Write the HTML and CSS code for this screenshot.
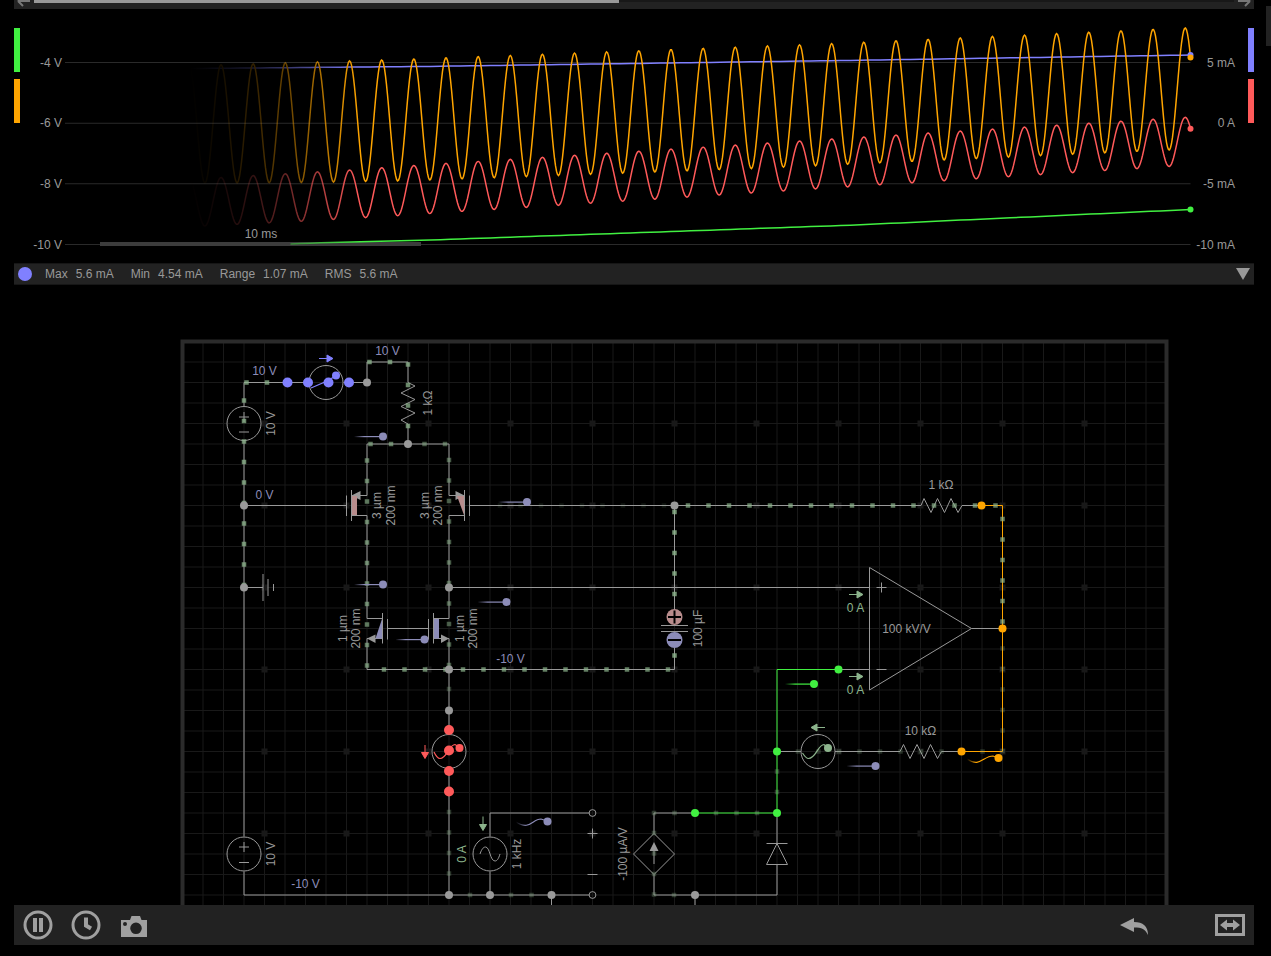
FILE: index.html
```html
<!DOCTYPE html>
<html lang="en">
<head>
<meta charset="utf-8">
<title>Circuit simulator</title>
<link rel="stylesheet" href="styles.css">
</head>
<body>
<main class="app">
  <div class="timeline">
    <button class="timeline-step" aria-label="Scroll back"><svg width="20" height="9"><path d="M4 1H16M4 1L9 6M4 1L9 -4"/></svg></button>
    <div class="timeline-track"><div class="timeline-thumb"></div></div>
    <button class="timeline-step" aria-label="Scroll forward"><svg width="20" height="9"><path d="M4 1H16M16 1L11 6M16 1L11 -4"/></svg></button>
  </div>

  <section class="scope" aria-label="Scope">
    <div class="chips"><button class="chip chip-green" aria-label="Green trace"></button><button class="chip chip-orange" aria-label="Orange trace"></button></div>
    <svg class="plot" id="plot" role="img" aria-label="Voltage and current traces"></svg>
    <div class="chips"><button class="chip chip-blue" aria-label="Blue trace"></button><button class="chip chip-red" aria-label="Red trace"></button></div>
  </section>

  <div class="stats">
    <span class="stats-dot"></span>
    <span class="stat"><span>Max</span><span>5.6 mA</span></span>
    <span class="stat"><span>Min</span><span>4.54 mA</span></span>
    <span class="stat"><span>Range</span><span>1.07 mA</span></span>
    <span class="stat"><span>RMS</span><span>5.6 mA</span></span>
    <button class="stats-toggle" aria-label="Collapse scope"><svg width="14" height="12"><path d="M0 0H14L7 12Z"/></svg></button>
  </div>

  <section class="board" aria-label="Circuit">
    <svg class="circuit" viewBox="14 285 1240 620" preserveAspectRatio="xMidYMin slice">
      <defs>
        <linearGradient id="tailBlue"><stop offset="0" stop-color="#8c8cb8" stop-opacity="0"/><stop offset="0.35" stop-color="#8c8cb8"/></linearGradient>
        <linearGradient id="tailGreen"><stop offset="0" stop-color="#41f041" stop-opacity="0"/><stop offset="0.35" stop-color="#41f041"/></linearGradient>
        <linearGradient id="tailOrange"><stop offset="0" stop-color="#ffa500" stop-opacity="0"/><stop offset="0.3" stop-color="#ffa500"/></linearGradient>
      </defs>
      <path class="grid" id="grid"/>
      <path class="grid-marks" id="marks"/>
      <rect class="frame" x="182.5" y="341.5" width="984" height="600"/>

      <g class="wire">
        <path d="M244 406V382.5H308.5M343.5 382.5H367V362H408V382.5L415 386L401 393L415 399.500L401 406.500L415 413L401 420L408 424V444"/>
        <path d="M367 495.5V444H449V495.5"/>
        <path d="M244 441V836.500M244 871.500V895H589"/>
        <path d="M244 505.5H346.5M244 587.5H263"/>
        <path d="M263 574V601M268 579V596M273.500 584V591"/>
        <path d="M346.5 495.5V516M351.5 490V521M351.500 495.5H367M351.500 515.5H367V618.500H382.500M382.500 613V643.500M387.500 619V639.500M367 638.5H382.500M367 638.5V669.5H674.5V648"/>
        <path d="M469.500 495.5V516M464.500 490V521M464.500 495.5H449M464.500 515.5H449V618.500H433.500M433.500 613V643.500M428.500 619V639.500M449 638.500H433.500M449 638.5V734"/>
        <path d="M387.500 628.5H428.500M469.500 505.5H921L924 498.500L931 512.500L937.500 498.500L944.500 512.500L951 498.500L958 512.500L962 505.500H981.500"/>
        <path d="M449 587.5H869.5M674.5 505.5V609M661 625.500H688M661 631.500H688"/>
        <path d="M869.5 567.5L971.5 628.5L869.5 690ZM971.5 628.5H1002.500M838.500 669.5H869.5"/>
        <path d="M876.500 587.5H886.500M881.500 582.500V592.500M876.500 669.5H886.500"/>
        <path d="M777 751.5H801M835 751.5H900L903.500 744.500L910 758.500L917 744.500L924 758.500L930.500 744.500L937.500 758.500L941.500 751.5H961.500"/>
        <path d="M449 769V895M490 871.500V895M490 836.500V813H589M551.500 895V945"/>
        <path d="M695 813H654V833.500M654 874.500V895H777V864.500M777 813V843.500M766.500 843.500H787.500M777 843.500L766.500 864.500H787.500ZM695 895V945"/>
        <path d="M654 833.500L674.500 854L654 874.500L633.500 854ZM654 864V850"/>
        <path d="M239 417H249M244 412V422M239 432H249M239 847H249M244 842V852M239 862.500H249M587.500 833.500H597.500M592.500 828.500V838.500M587.500 874.500H597.500"/>
        <circle cx="244" cy="423.5" r="17"/><circle cx="326" cy="382.5" r="17"/><circle cx="244" cy="854" r="17"/>
        <circle cx="449" cy="751.5" r="17"/><circle cx="490" cy="854" r="17"/><circle cx="818" cy="751.5" r="17"/>
        <circle cx="592.500" cy="813" r="3.400"/><circle cx="592.500" cy="895" r="3.400"/>
        <path d="M480 854C482 848 484 847 485.500 847C490 847 490 861 495 861C497 861 498.500 859 500 854"/>
      </g>
      <path class="wire-green" d="M838.500 669.5H777V813H695"/>
      <path class="wire-orange" d="M981.500 505.5H1002.500V751.5H961.500"/>

      <path class="fill-wire" d="M351.500 495.5L360.500 491V500ZM464.500 495.5L455.500 491V500ZM367 638.500L375.500 634.500V643ZM449 638.500L441 634.500V643ZM654 842L649.500 851H658.500Z"/>
      <path class="fill-rose" d="M352 496H357V515H352ZM457 496H464V515Z"/>
      <path class="fill-blue" d="M382 619V638.500H375.500ZM434 619H439V638.500H434Z"/>
      <circle class="fill-rose" cx="674.500" cy="617" r="8"/>
      <circle class="fill-blue" cx="674.500" cy="640" r="8"/>
      <path class="polarity" d="M668 617H681M674.500 610.500V623.500M668 640H681"/>

      <g id="charges"></g>
      <g id="nodes"></g>

      <path class="spark spark-violet" d="M311 388Q324 383 336 376"/>
      <path class="spark spark-red" d="M434 752Q437 758.500 440 758.500C447 758.500 449 744.500 455 744.500L459 747"/>
      <path class="spark spark-sage" d="M802.500 753Q806 758.500 808.500 758.500C816 758.500 818 744.500 824 744.500L828 748"/>
      <path class="spark" stroke="url(#tailOrange)" d="M967 759C980 768 983 756 993 756L998 758"/>
      <path class="spark" stroke="url(#tailBlue)" d="M516 822C530 831 532 819 541 819L547 821"/>
      <g id="tails"></g>

      <path class="arrow arrow-violet" d="M319 358.500H327M327 355L333 358.500L327 362Z"/>
      <path class="arrow arrow-red" d="M425 745V753M421.500 752.500H428.500L425 758.500Z"/>
      <path class="arrow arrow-sage" d="M483 816.500V825M479.500 824.500H486.500L483 830.500ZM849 594.500H857M857 591L863 594.500L857 598ZM849 676.500H857M857 673L863 676.500L857 680ZM825 727.500H817M817 724L811 727.500L817 731Z"/>

      <g class="label label-volt">
        <text x="264.500" y="375">10 V</text><text x="387.500" y="355">10 V</text><text x="264.500" y="498.500">0 V</text>
        <text x="510.500" y="662.500">-10 V</text><text x="305.500" y="888">-10 V</text>
      </g>
      <g class="label label-amp">
        <text x="855.500" y="612">0 A</text><text x="855.500" y="694">0 A</text>
        <text transform="translate(466 854) rotate(-90)">0 A</text>
      </g>
      <g class="label">
        <text x="941" y="488.500">1 kΩ</text><text x="920.500" y="734.500">10 kΩ</text><text x="906.500" y="632.500">100 kV/V</text>
        <text transform="translate(274.500 423.500) rotate(-90)">10 V</text>
        <text transform="translate(432 403) rotate(-90)">1 kΩ</text>
        <text transform="translate(380.500 505.500) rotate(-90)">3 µm</text>
        <text transform="translate(394.500 505.500) rotate(-90)">200 nm</text>
        <text transform="translate(428.500 505.500) rotate(-90)">3 µm</text>
        <text transform="translate(441.500 505.500) rotate(-90)">200 nm</text>
        <text transform="translate(347 628.500) rotate(-90)">1 µm</text>
        <text transform="translate(360 628.500) rotate(-90)">200 nm</text>
        <text transform="translate(463.500 628.500) rotate(-90)">1 µm</text>
        <text transform="translate(477 628.500) rotate(-90)">200 nm</text>
        <text transform="translate(702 628.500) rotate(-90)">100 µF</text>
        <text transform="translate(274.500 854) rotate(-90)">10 V</text>
        <text transform="translate(521 854) rotate(-90)">1 kHz</text>
        <text transform="translate(627 854) rotate(-90)">-100 µA/V</text>
      </g>
    </svg>
  </section>

  <nav class="toolbar" aria-label="Simulation">
    <button class="tool" aria-label="Pause"><svg width="32" height="32"><circle class="ring" cx="16" cy="16" r="13"/><path d="M11 9H15V23H11ZM17 9H21V23H17Z"/></svg></button>
    <button class="tool" aria-label="Time"><svg width="32" height="32"><circle class="ring" cx="16" cy="16" r="13"/><path class="hand" d="M16 8.500V16.500L21 19.500"/></svg></button>
    <button class="tool" aria-label="Snapshot"><svg width="32" height="32"><path fill-rule="evenodd" d="M3 11H12L13.500 7H22L23.500 11H29V28H3ZM18 13.500A5.800 5.800 0 1 0 18 25.100A5.800 5.800 0 1 0 18 13.500ZM7 13A2 2 0 1 0 7 17A2 2 0 1 0 7 13Z"/></svg></button>
    <button class="tool tool-undo" aria-label="Undo"><svg width="32" height="32"><path d="M2 16L16 9V13C25 13 30 17 30 26C27 20 24 18.500 16 18.500V23Z"/></svg></button>
    <button class="tool" aria-label="Fit to view"><svg width="32" height="32"><path class="screen" d="M2.500 6.500H29.500V25.500H2.500Z"/><path d="M6 16L13 10.500V14H19V10.500L26 16L19 21.500V18H13V21.500Z"/></svg></button>
  </nav>
</main>
<button class="side-tab" aria-label="Open panel"></button>
<script src="app.js"></script>
</body>
</html>
```
FILE: styles.css
```css
* { box-sizing: border-box; }
body {
  margin: 0;
  background: #000;
  color: #999;
  font: 12px/20px "Liberation Sans", Arial, sans-serif;
  overflow: hidden;
}
button { border: 0; padding: 0; background: none; color: inherit; display: block; }
svg { display: block; }

.app {
  display: flex;
  flex-direction: column;
  height: 100vh;
  padding: 0 17px 11px 14px;
}

.timeline { display: flex; flex: none; height: 9px; background: #222; overflow: hidden; }
.timeline-step { width: 20px; height: 9px; }
.timeline-step path { fill: none; stroke: #777; stroke-width: 2; }
.timeline-track { flex: 1; height: 2px; background: #181818; }
.timeline-thumb { width: 48.75%; height: 3px; background: #999; }

.scope { display: flex; flex: none; height: 254px; }
.chips { display: flex; flex-direction: column; gap: 7px; padding-top: 19px; }
.chip { width: 6px; height: 44px; }
.chip-green { background: #41f041; }
.chip-orange { background: #ffa500; }
.chip-blue { background: #8080ff; }
.chip-red { background: #ff5a5a; }
.plot { flex: 1; min-width: 0; height: 254px; overflow: hidden; }
.plot text { fill: #999; }
.plot .end { text-anchor: end; }
.plot .mid { text-anchor: middle; }
.rule { stroke: #2a2a2a; }
.scale { fill: #3c3c3c; }
.trace { fill: none; stroke-width: 1.5; }

.stats {
  display: flex;
  flex: none;
  align-items: center;
  gap: 17px;
  height: 22px;
  padding: 0 4px;
  border: solid #161616;
  border-width: 1px 0;
  background: #222;
}
.stats-dot { width: 14px; height: 14px; margin-right: -4px; border-radius: 50%; background: #8080ff; }
.stat { display: flex; gap: 8px; }
.stats-toggle { margin-left: auto; }
.stats-toggle path { fill: #999; }

.board { flex: 1; min-height: 0; overflow: hidden; }
.circuit { width: 100%; height: 100%; }
.grid { fill: none; stroke: #191919; }
.grid-marks { fill: #181818; }
.frame { fill: none; stroke: #2b2b2b; stroke-width: 4; }
.wire { fill: none; stroke: #999; }
.wire-green { fill: none; stroke: #41f041; }
.wire-orange { fill: none; stroke: #ffa500; }
.fill-wire { fill: #999; }
.fill-rose { fill: #b88c8c; }
.fill-blue { fill: #8c8cb8; }
.polarity { fill: none; stroke: #000; stroke-width: 2; }
.charge { fill: #8cb48c; }
.spark { fill: none; stroke-width: 1.2; }
.spark-violet { stroke: #8080ff; }
.spark-red { stroke: #ff5a5a; }
.spark-sage { stroke: #8cb48c; }
.arrow-violet { fill: #8080ff; stroke: #8080ff; }
.arrow-red { fill: #ff5a5a; stroke: #ff5a5a; }
.arrow-sage { fill: #8cb48c; stroke: #8cb48c; }
.arrow { stroke-width: 1; }
.label { fill: #999; text-anchor: middle; }
.label-volt { fill: #8c8cb8; }
.label-amp { fill: #8cb48c; }

.toolbar { display: flex; flex: none; height: 40px; background: #222; }
.tool { display: flex; align-items: center; justify-content: center; width: 48px; height: 40px; }
.tool path { fill: #a0a0a0; }
.tool .ring, .tool .screen { fill: none; stroke: #a0a0a0; stroke-width: 3; }
.tool .hand { fill: none; stroke: #a0a0a0; stroke-width: 4; }
.tool-undo { margin-left: auto; margin-right: 48px; }

.side-tab { position: absolute; top: 6px; right: 0; width: 5px; height: 40px; background: #222; }
```
FILE: app.js
```js
const COLORS = {
  gray: '#999', green: '#41f041', orange: '#ffa500',
  violet: '#8080ff', red: '#ff5a5a', blue: '#8c8cb8', sage: '#8cb48c'
};

/* Scope. Trace points are [distance before the latest sample, y]. */
function lerp(points, d) {
  for (let i = 1; i < points.length; i++) {
    const [d0, y0] = points[i - 1], [d1, y1] = points[i];
    if (d >= d1) return y0 + (y1 - y0) * (d - d0) / (d1 - d0);
  }
  return points[points.length - 1][1];
}
const PERIOD = 32.14;
const waves = [
  { color: 'red',
    top: [[970, 168.5], [841, 161], [777, 156.5], [359, 130], [5, 108.3], [0, 108]],
    low: [[986, 217], [889, 212.3], [793, 206.7], [729, 202.5], [439, 184], [21, 157.5], [0, 156]] },
  { color: 'orange',
    top: [[970, 55.7], [777, 50], [359, 34.6], [5, 18.9], [0, 18.7]],
    low: [[986, 174], [889, 173.5], [793, 172], [729, 170], [439, 159.6], [21, 141], [0, 140]] }
];
const ramps = [
  { color: 'green', points: [[900, 235], [870, 233.8], [760, 231], [340, 216.2], [0, 200.5]] },
  { color: 'violet', points: [[1000, 59.5], [760, 57.4], [340, 51.4], [0, 46]] }
];

function drawPlot() {
  const svg = document.getElementById('plot');
  const width = svg.getBoundingClientRect().width;
  const end = width - 57.5;
  let out = `<defs><linearGradient id="fade" gradientUnits="userSpaceOnUse" x1="${end - 1000}" x2="${end - 830}" y1="0" y2="0">
    <stop offset="0" stop-color="#fff" stop-opacity="0"/><stop offset=".18" stop-color="#fff" stop-opacity=".08"/>
    <stop offset=".37" stop-color="#fff" stop-opacity=".2"/><stop offset=".56" stop-color="#fff" stop-opacity=".4"/>
    <stop offset=".75" stop-color="#fff" stop-opacity=".65"/><stop offset="1" stop-color="#fff"/></linearGradient>
    <mask id="history" style="mask-type:alpha" maskUnits="userSpaceOnUse" x="0" y="0" width="${width}" height="254"><rect width="${width}" height="254" fill="url(#fade)"/></mask></defs>`;
  const left = ['-4 V', '-6 V', '-8 V', '-10 V'];
  const right = ['5 mA', '0 A', '-5 mA', '-10 mA'];
  const rows = [53.5, 114.25, 174.75, 235.5];
  rows.forEach((y, i) => {
    out += `<path class="rule" d="M45 ${y}H${end}"/>
      <text class="end" x="42" y="${y + 4}">${left[i]}</text>
      <text class="end" x="${width - 13}" y="${y + 4}">${right[i]}</text>`;
  });
  out += `<rect class="scale" x="80" y="233" width="321" height="4"/><text class="mid" x="241" y="229">10 ms</text>`;
  out += '<g mask="url(#history)">';
  const path = (color, f, start, step) => {
    let d = '';
    for (let t = start; t >= 0; t -= step) d += `${d ? 'L' : 'M'}${(end - t).toFixed(1)} ${f(t).toFixed(2)}`;
    out += `<path class="trace" stroke="${COLORS[color]}" d="${d}"/>`;
  };
  const wave = w => t => {
    const a = lerp(w.top, t), b = lerp(w.low, t);
    return (a + b) / 2 - (b - a) / 2 * Math.cos(2 * Math.PI * (t - 5.3) / PERIOD);
  };
  ramps.forEach(r => path(r.color, t => lerp(r.points, t), r.points[0][0], 10));
  waves.forEach(w => path(w.color, wave(w), 1000, 1));
  out += '</g>';
  ramps.forEach(r => { out += `<circle cx="${end}" cy="${lerp(r.points, 0)}" r="3" fill="${COLORS[r.color]}"/>`; });
  waves.forEach(w => { out += `<circle cx="${end}" cy="${wave(w)(0)}" r="3" fill="${COLORS[w.color]}"/>`; });
  svg.innerHTML = out;
}

/* Board */
const PITCH = 20.5, X0 = 182.5, Y0 = 341.5;
let grid = '', marks = '';
for (let i = 1; i < 48; i++) grid += `M${X0 + i * PITCH} ${Y0}V945`;
for (let j = 1; j < 29; j++) grid += `M${X0} ${Y0 + j * PITCH}H1166.5`;
for (let i = 4; i < 48; i += 4)
  for (let j = 4; j < 28; j += 4) marks += `M${X0 + i * PITCH - 3} ${Y0 + j * PITCH - 3}h6v6h-6z`;
document.getElementById('grid').setAttribute('d', grid);
document.getElementById('marks').setAttribute('d', marks);

/* Moving charges: x, y, horizontal step, vertical step, count, opacity */
const runs = [
  [246.5, 382.5, PITCH, 0, 2, .75], [244, 400.5, 0, PITCH, 10, .75],
  [369.5, 362, PITCH, 0, 2, .75], [408, 364.5, 0, PITCH, 4, .75],
  [370.5, 444, PITCH, 0, 2, .65], [424.5, 444, PITCH, 0, 2, .5],
  [367, 460.5, 0, PITCH, 11, .65], [449, 460, 0, PITCH, 11, .5],
  [384, 669.5, PITCH, 0, 4, .7], [463, 669.5, PITCH, 0, 11, .7],
  [674.5, 512, 0, PITCH, 5, .8], [674.5, 655.5, 0, PITCH, 1, .8],
  [688, 505.5, PITCH, 0, 16, .7], [1002.5, 519, 0, PITCH, 6, .7],
  [1002.5, 648.5, 0, PITCH, 6, .25], [500, 505.5, PITCH, 0, 9, .12],
  [798, 751.5, PITCH, 0, 10, .25], [777, 771.5, 0, PITCH, 2, .3],
  [716, 813, PITCH, 0, 3, .3], [654, 813, PITCH, 0, 2, .3],
  [654, 833, 0, PITCH, 4, .3], [674, 895, PITCH, 0, 1, .3],
  [449, 689, 0, PITCH, 1, .3], [449, 812, 0, PITCH, 4, .3],
  [470, 895, PITCH, 0, 1, .3], [511, 895, PITCH, 0, 2, .3]
];
const SIZE = 4.5;
document.getElementById('charges').innerHTML = runs.map(([x, y, dx, dy, n, o]) =>
  Array.from({ length: n }, (_, k) =>
    `<rect class="charge" x="${x + dx * k - SIZE / 2}" y="${y + dy * k - SIZE / 2}" width="${SIZE}" height="${SIZE}" opacity="${o}"/>`).join('')).join('');

const dot = (c, r) => ([x, y]) => `<circle cx="${x}" cy="${y}" r="${r}" fill="${COLORS[c]}"/>`;
document.getElementById('nodes').innerHTML = [
  ...[[367, 382.5], [408, 444], [244, 505.5], [244, 587.5], [674.5, 505.5], [449, 587.5], [449, 669.5],
    [449, 710.5], [449, 895], [490, 895], [551.5, 895], [695, 895]].map(dot('gray', 4)),
  ...[[838.5, 669.5], [777, 751.5], [777, 813], [695, 813]].map(dot('green', 4)),
  ...[[981.5, 505.5], [1002.5, 628.5], [961.5, 751.5]].map(dot('orange', 4)),
  ...[[287.5, 382.5], [308, 382.5], [328.5, 382.5], [349, 382.5]].map(dot('violet', 5)),
  ...[[449, 730], [449, 750.5], [449, 771], [449, 791.5]].map(dot('red', 5))
].join('');

/* Miniature history beside each probe point */
const tail = (c, id) => ([x, y]) =>
  `<rect x="${x - 29}" y="${y - .5}" width="29" height="1.2" fill="url(#${id})"/>` + dot(c, 4)([x, y]);
document.getElementById('tails').innerHTML = [
  ...[[383, 436.5], [527, 502], [383, 584.5], [424.5, 639.5], [506.5, 602], [875.5, 766]].map(tail('blue', 'tailBlue')),
  tail('green', 'tailGreen')([814, 684]),
  dot('violet', 4)([336, 375.5]), dot('red', 4)([459.5, 748]), dot('sage', 4)([828, 748]),
  dot('orange', 4)([998.5, 758]), dot('blue', 4)([547.5, 821.5])
].join('');

drawPlot();
window.addEventListener('resize', drawPlot);
```
